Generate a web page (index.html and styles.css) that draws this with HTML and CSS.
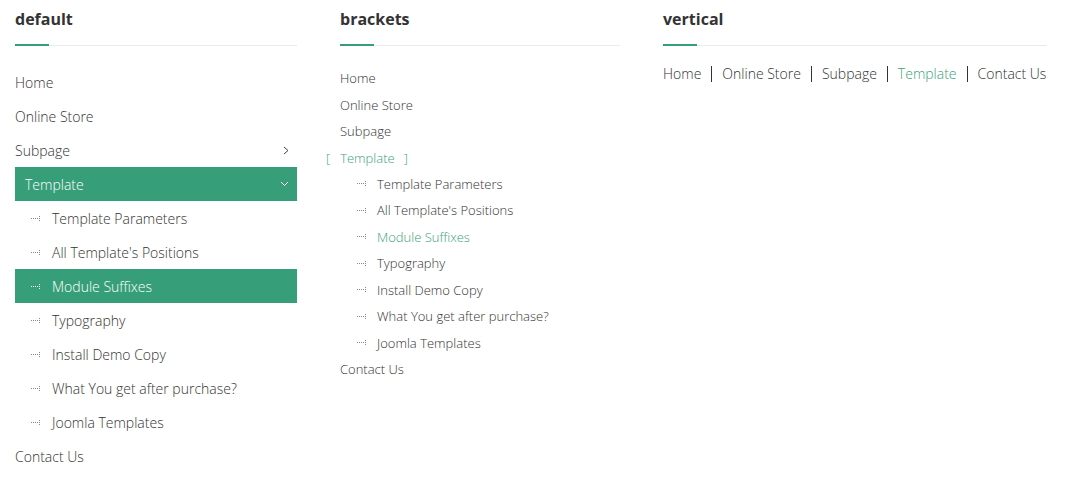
FILE: index.html
```html
<!DOCTYPE html>
<html>
<head>
<meta charset="utf-8">
<link rel="stylesheet" href="styles.css">
</head>
<body>
<div class="page">
  <section class="col">
    <h3 class="title">default</h3>
    <ul class="menu m-default">
      <li><span class="lnk">Home</span></li>
      <li><span class="lnk">Online Store</span></li>
      <li class="parent"><span class="lnk">Subpage</span>
        <svg class="chev" width="6" height="9" viewBox="0 0 6 9"><polyline points="1,1 5,4.5 1,8" fill="none" stroke="#444" stroke-width="1"/></svg>
      </li>
      <li class="parent active"><span class="lnk">Template</span>
        <svg class="chev" width="9" height="6" viewBox="0 0 9 6"><polyline points="1,1 4.5,4.5 8,1" fill="none" stroke="#fff" stroke-width="1"/></svg>
      </li>
      <li class="sub"><svg class="tree" width="10" height="7" viewBox="0 0 10 7"><g fill="#888"><rect x="0" y="3" width="1" height="1"/><rect x="2" y="3" width="1" height="1"/><rect x="4" y="3" width="1" height="1"/><rect x="6" y="3" width="1" height="1"/><rect x="8" y="1" width="1" height="1"/><rect x="8" y="3" width="1" height="1"/><rect x="8" y="5" width="1" height="1"/></g></svg><span class="lnk">Template Parameters</span></li>
      <li class="sub"><svg class="tree" width="10" height="7" viewBox="0 0 10 7"><g fill="#888"><rect x="0" y="3" width="1" height="1"/><rect x="2" y="3" width="1" height="1"/><rect x="4" y="3" width="1" height="1"/><rect x="6" y="3" width="1" height="1"/><rect x="8" y="1" width="1" height="1"/><rect x="8" y="3" width="1" height="1"/><rect x="8" y="5" width="1" height="1"/></g></svg><span class="lnk">All Template's Positions</span></li>
      <li class="sub current"><svg class="tree" width="10" height="7" viewBox="0 0 10 7"><g fill="#fff"><rect x="0" y="3" width="1" height="1"/><rect x="2" y="3" width="1" height="1"/><rect x="4" y="3" width="1" height="1"/><rect x="6" y="3" width="1" height="1"/><rect x="8" y="1" width="1" height="1"/><rect x="8" y="3" width="1" height="1"/><rect x="8" y="5" width="1" height="1"/></g></svg><span class="lnk">Module Suffixes</span></li>
      <li class="sub"><svg class="tree" width="10" height="7" viewBox="0 0 10 7"><g fill="#888"><rect x="0" y="3" width="1" height="1"/><rect x="2" y="3" width="1" height="1"/><rect x="4" y="3" width="1" height="1"/><rect x="6" y="3" width="1" height="1"/><rect x="8" y="1" width="1" height="1"/><rect x="8" y="3" width="1" height="1"/><rect x="8" y="5" width="1" height="1"/></g></svg><span class="lnk">Typography</span></li>
      <li class="sub"><svg class="tree" width="10" height="7" viewBox="0 0 10 7"><g fill="#888"><rect x="0" y="3" width="1" height="1"/><rect x="2" y="3" width="1" height="1"/><rect x="4" y="3" width="1" height="1"/><rect x="6" y="3" width="1" height="1"/><rect x="8" y="1" width="1" height="1"/><rect x="8" y="3" width="1" height="1"/><rect x="8" y="5" width="1" height="1"/></g></svg><span class="lnk">Install Demo Copy</span></li>
      <li class="sub"><svg class="tree" width="10" height="7" viewBox="0 0 10 7"><g fill="#888"><rect x="0" y="3" width="1" height="1"/><rect x="2" y="3" width="1" height="1"/><rect x="4" y="3" width="1" height="1"/><rect x="6" y="3" width="1" height="1"/><rect x="8" y="1" width="1" height="1"/><rect x="8" y="3" width="1" height="1"/><rect x="8" y="5" width="1" height="1"/></g></svg><span class="lnk">What You get after purchase?</span></li>
      <li class="sub"><svg class="tree" width="10" height="7" viewBox="0 0 10 7"><g fill="#888"><rect x="0" y="3" width="1" height="1"/><rect x="2" y="3" width="1" height="1"/><rect x="4" y="3" width="1" height="1"/><rect x="6" y="3" width="1" height="1"/><rect x="8" y="1" width="1" height="1"/><rect x="8" y="3" width="1" height="1"/><rect x="8" y="5" width="1" height="1"/></g></svg><span class="lnk">Joomla Templates</span></li>
      <li><span class="lnk">Contact Us</span></li>
    </ul>
  </section>

  <section class="col">
    <h3 class="title">brackets</h3>
    <ul class="menu m-brackets">
      <li><span class="lnk">Home</span></li>
      <li><span class="lnk">Online Store</span></li>
      <li><span class="lnk">Subpage</span></li>
      <li class="active"><span class="lnk br">Template</span></li>
      <li class="sub"><svg class="tree" width="10" height="7" viewBox="0 0 10 7"><g fill="#888"><rect x="0" y="3" width="1" height="1"/><rect x="2" y="3" width="1" height="1"/><rect x="4" y="3" width="1" height="1"/><rect x="6" y="3" width="1" height="1"/><rect x="8" y="1" width="1" height="1"/><rect x="8" y="3" width="1" height="1"/><rect x="8" y="5" width="1" height="1"/></g></svg><span class="lnk">Template Parameters</span></li>
      <li class="sub"><svg class="tree" width="10" height="7" viewBox="0 0 10 7"><g fill="#888"><rect x="0" y="3" width="1" height="1"/><rect x="2" y="3" width="1" height="1"/><rect x="4" y="3" width="1" height="1"/><rect x="6" y="3" width="1" height="1"/><rect x="8" y="1" width="1" height="1"/><rect x="8" y="3" width="1" height="1"/><rect x="8" y="5" width="1" height="1"/></g></svg><span class="lnk">All Template's Positions</span></li>
      <li class="sub current"><svg class="tree" width="10" height="7" viewBox="0 0 10 7"><g fill="#888"><rect x="0" y="3" width="1" height="1"/><rect x="2" y="3" width="1" height="1"/><rect x="4" y="3" width="1" height="1"/><rect x="6" y="3" width="1" height="1"/><rect x="8" y="1" width="1" height="1"/><rect x="8" y="3" width="1" height="1"/><rect x="8" y="5" width="1" height="1"/></g></svg><span class="lnk">Module Suffixes</span></li>
      <li class="sub"><svg class="tree" width="10" height="7" viewBox="0 0 10 7"><g fill="#888"><rect x="0" y="3" width="1" height="1"/><rect x="2" y="3" width="1" height="1"/><rect x="4" y="3" width="1" height="1"/><rect x="6" y="3" width="1" height="1"/><rect x="8" y="1" width="1" height="1"/><rect x="8" y="3" width="1" height="1"/><rect x="8" y="5" width="1" height="1"/></g></svg><span class="lnk">Typography</span></li>
      <li class="sub"><svg class="tree" width="10" height="7" viewBox="0 0 10 7"><g fill="#888"><rect x="0" y="3" width="1" height="1"/><rect x="2" y="3" width="1" height="1"/><rect x="4" y="3" width="1" height="1"/><rect x="6" y="3" width="1" height="1"/><rect x="8" y="1" width="1" height="1"/><rect x="8" y="3" width="1" height="1"/><rect x="8" y="5" width="1" height="1"/></g></svg><span class="lnk">Install Demo Copy</span></li>
      <li class="sub"><svg class="tree" width="10" height="7" viewBox="0 0 10 7"><g fill="#888"><rect x="0" y="3" width="1" height="1"/><rect x="2" y="3" width="1" height="1"/><rect x="4" y="3" width="1" height="1"/><rect x="6" y="3" width="1" height="1"/><rect x="8" y="1" width="1" height="1"/><rect x="8" y="3" width="1" height="1"/><rect x="8" y="5" width="1" height="1"/></g></svg><span class="lnk">What You get after purchase?</span></li>
      <li class="sub"><svg class="tree" width="10" height="7" viewBox="0 0 10 7"><g fill="#888"><rect x="0" y="3" width="1" height="1"/><rect x="2" y="3" width="1" height="1"/><rect x="4" y="3" width="1" height="1"/><rect x="6" y="3" width="1" height="1"/><rect x="8" y="1" width="1" height="1"/><rect x="8" y="3" width="1" height="1"/><rect x="8" y="5" width="1" height="1"/></g></svg><span class="lnk">Joomla Templates</span></li>
      <li><span class="lnk">Contact Us</span></li>
    </ul>
  </section>

  <section class="col">
    <h3 class="title">vertical</h3>
    <ul class="m-vertical">
      <li>Home</li>
      <li>Online Store</li>
      <li>Subpage</li>
      <li class="active">Template</li>
      <li>Contact Us</li>
    </ul>
  </section>
</div>
</body>
</html>
```

FILE: styles.css
```css
* { box-sizing: border-box; }
body {
  margin: 0;
  background: #fff;
  font-family: "Open Sans", "Liberation Sans", sans-serif;
  color: #333;
}
.page {
  display: grid;
  grid-template-columns: 282px 280px 384px;
  column-gap: 43px;
  padding-left: 15px;
}
.title {
  position: relative;
  margin: 0;
  padding: 8px 0 15px;
  font-size: 16px;
  line-height: 22px;
  font-weight: 700;
  color: #333;
  border-bottom: 1px solid #ebebeb;
}
.title::after {
  content: "";
  position: absolute;
  left: 0;
  bottom: -1px;
  width: 34px;
  height: 2px;
  background: #379e7a;
}
.menu {
  list-style: none;
  margin: 19px 0 0;
  padding: 0;
}
.menu li {
  display: flex;
  align-items: center;
  font-weight: 300;
  color: #333;
  white-space: nowrap;
}
.m-default li {
  height: 34px;
  font-size: 14px;
}
.m-default li.parent {
  justify-content: space-between;
  padding-right: 8px;
}
.m-default li.active {
  background: #379e7a;
  color: #fff;
  padding-left: 10px;
}
.m-default li.current {
  background: #379e7a;
  color: #fff;
}
.sub .tree {
  margin-left: 16px;
  margin-right: 11px;
  flex: none;
}
.m-brackets li {
  height: 26.45px;
  font-size: 13px;
}
.m-brackets li.active .lnk { color: #3b9f7d; }
.m-brackets li.current .lnk { color: #3b9f7d; }
.m-brackets .sub .tree { margin-left: 17px; margin-right: 10px; }
.br::before {
  content: "[";
  margin-left: -14px;
  margin-right: 10px;
}
.br::after {
  content: "]";
  margin-left: 9px;
}
.m-vertical {
  list-style: none;
  margin: 20px 0 0;
  padding: 0;
  display: flex;
}
.m-vertical li {
  font-size: 14px;
  font-weight: 300;
  line-height: 16px;
  padding: 0 10px;
  border-left: 1px solid #333;
  color: #333;
  white-space: nowrap;
}
.m-vertical li:first-child {
  padding-left: 0;
  border-left: none;
}
.m-vertical li.active { color: #3b9f7d; }
```
